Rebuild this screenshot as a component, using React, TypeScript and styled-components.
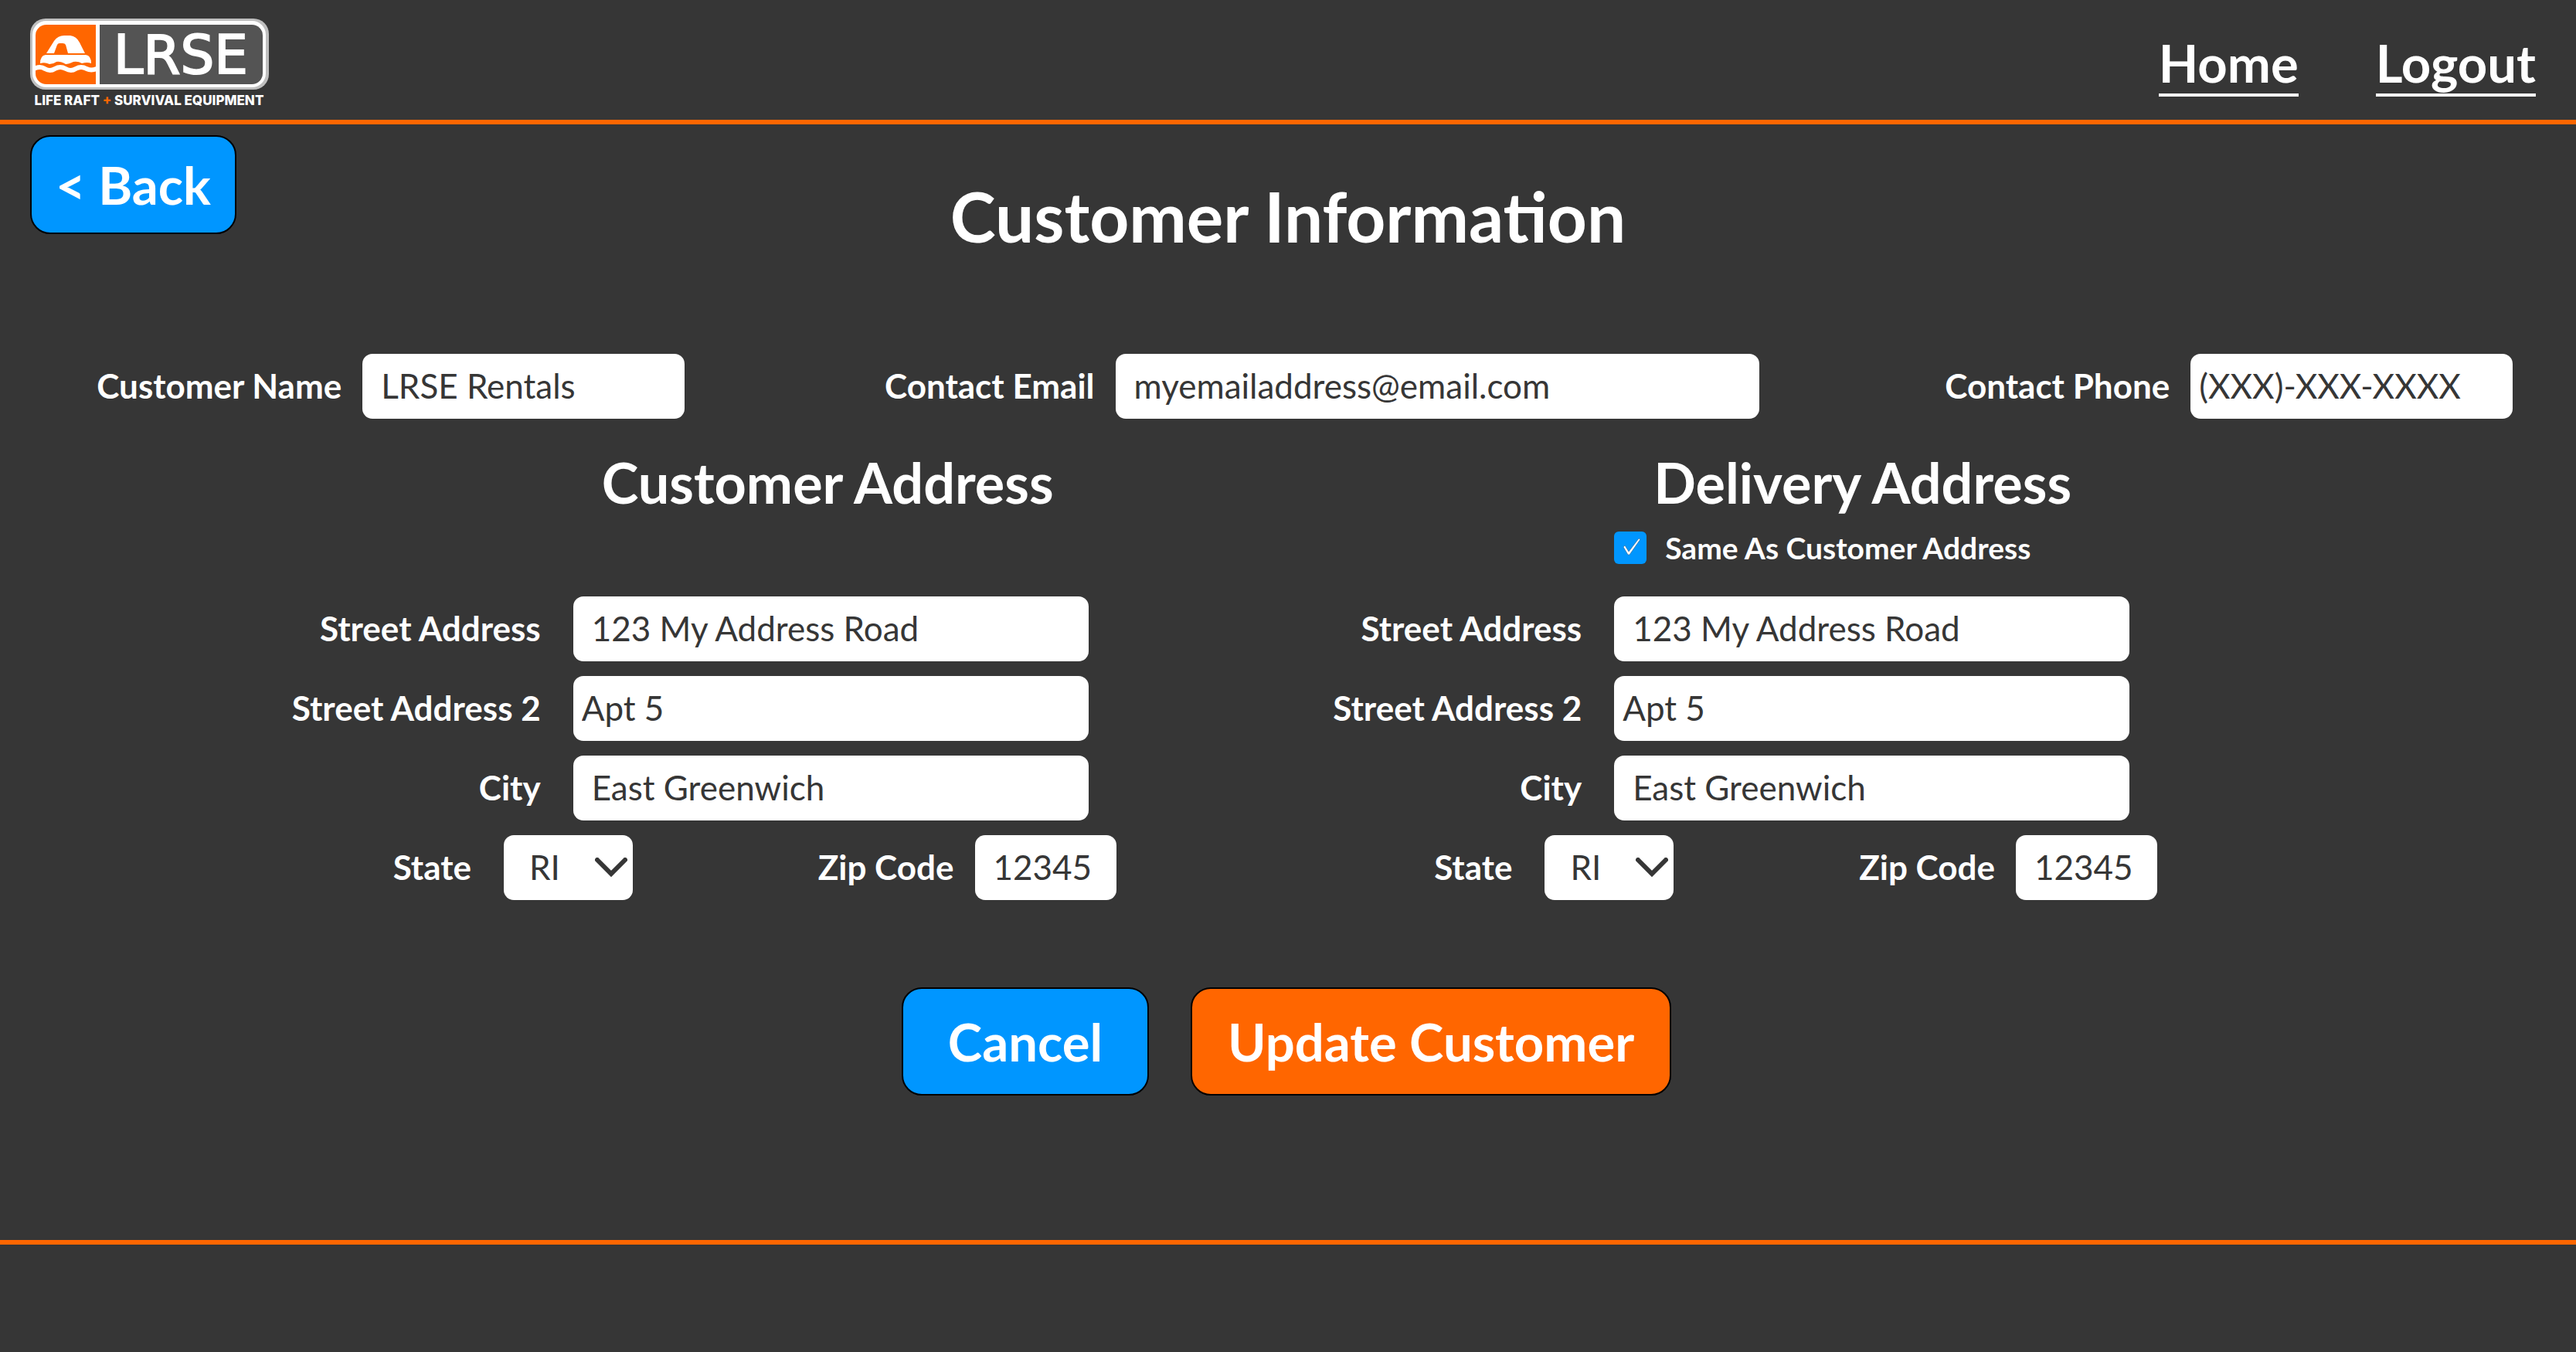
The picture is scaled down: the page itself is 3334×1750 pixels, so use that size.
import React, { useState } from "react";
import styled, { createGlobalStyle } from "styled-components";

const FONT = 'Lato, "Open Sans", sans-serif';

const GlobalStyle = createGlobalStyle`
  *, *::before, *::after { box-sizing: border-box; }
  body { margin: 0; background: #363636; }
`;

const Page = styled.div`
  display: flex;
  flex-direction: column;
  min-height: 100vh;
  background: #363636;
  color: #ffffff;
  font-family: ${FONT};
`;

const Header = styled.header`
  display: flex;
  align-items: center;
  justify-content: space-between;
  height: 161px;
  padding: 0 52px 0 39px;
  border-bottom: 6px solid #ff6600;
`;

const LogoLink = styled.a`
  display: block;
  padding-top: 12px;
  svg { display: block; }
`;

const Nav = styled.nav`
  display: flex;
  gap: 100px;
  padding-top: 10px;
`;

const NavLink = styled.a`
  color: #ffffff;
  font-size: 67px;
  font-weight: 700;
  line-height: 80px;
  text-decoration: none;
  border-bottom: 4px solid #ffffff;
`;

const Main = styled.main`
  flex: 1;
`;

const Button = styled.button<{ $tone: "blue" | "orange"; $size?: "small" | "large"; $pad: number }>`
  padding: ${(p) => `${p.$size === "small" ? 16 : 22}px ${p.$pad}px`};
  border: 2px solid #000000;
  border-radius: 26px;
  background: ${(p) => (p.$tone === "blue" ? "#0096ff" : "#ff6600")};
  color: #ffffff;
  font-family: inherit;
  font-size: 67px;
  font-weight: 700;
  line-height: 92px;
  cursor: pointer;
`;

const BackBar = styled.div`
  display: flex;
  height: 67px;
  padding: 14px 39px 0;
  align-items: flex-start;
`;

const Title = styled.h1`
  margin: 0;
  font-size: 89px;
  font-weight: 700;
  line-height: 104px;
  text-align: center;
`;

const ContactRow = styled.div`
  display: grid;
  grid-template-columns: 886fr 1391fr 975fr;
  padding: 126px 82px 0 0;
`;

const Field = styled.div<{ $gap?: number }>`
  display: flex;
  align-items: center;
  justify-content: flex-end;
  gap: ${(p) => p.$gap ?? 27}px;
`;

const Label = styled.label`
  padding-bottom: 2px;
  font-size: 44px;
  font-weight: 700;
  line-height: 60px;
  white-space: nowrap;
`;

const TextBox = styled.input<{ $width: string; $inset?: number }>`
  width: ${(p) => p.$width};
  height: 84px;
  padding: 0 0 2px ${(p) => p.$inset ?? 24}px;
  border: 0;
  border-radius: 13px;
  background: #ffffff;
  color: #363636;
  font-family: inherit;
  font-size: 44px;
`;

const Addresses = styled.div`
  display: grid;
  grid-template-columns: 1fr 1fr;
  padding: 42px 542px 0 97px;
`;

const Section = styled.section`
  display: flex;
  flex-direction: column;
  align-items: flex-end;
`;

const SectionTop = styled.div<{ $shift: number }>`
  display: flex;
  flex-direction: column;
  width: 20vw;
  height: 188px;
  margin-right: 36px;
  h2 {
    margin: 0;
    padding-right: ${(p) => p.$shift}px;
    font-size: 72px;
    font-weight: 700;
    line-height: 80px;
    text-align: center;
    white-space: nowrap;
  }
`;

const SameRow = styled.label`
  display: flex;
  align-items: center;
  gap: 24px;
  margin-top: 15px;
  font-size: 39px;
  font-weight: 700;
  line-height: 60px;
  white-space: nowrap;
`;

const Tick = styled.span`
  display: grid;
  width: 42px;
  height: 42px;
  input, svg { grid-area: 1 / 1; }
  input {
    appearance: none;
    width: 42px;
    height: 42px;
    margin: 0;
    border-radius: 6px;
    background: #ffffff;
  }
  input:checked { background: #0096ff; }
  svg { pointer-events: none; }
`;

const Rows = styled.div`
  display: grid;
  gap: 19px;
`;

const AddressRow = styled(Field)`
  margin-right: 36px;
`;

const LastRow = styled.div`
  display: flex;
  justify-content: flex-end;
  gap: 240px;
`;

const SelectWrap = styled.span`
  display: grid;
  width: 5vw;
  select, svg { grid-area: 1 / 1; }
  svg {
    justify-self: end;
    align-self: center;
    margin-right: 7px;
    pointer-events: none;
  }
`;

const Select = styled.select`
  appearance: none;
  width: 100%;
  height: 84px;
  padding: 0 0 2px 33px;
  border: 0;
  border-radius: 13px;
  background: #ffffff;
  color: #363636;
  font-family: inherit;
  font-size: 44px;
`;

const Actions = styled.div`
  display: flex;
  justify-content: center;
  gap: 54px;
  padding: 113px 4px 0 0;
`;

const Footer = styled.footer`
  height: 145px;
  border-top: 6px solid #ff6600;
`;

function Logo() {
  return (
    <svg width="310" height="120" viewBox="0 0 310 120" role="img" aria-label="LRSE Life Raft and Survival Equipment">
      <defs>
        <clipPath id="badge">
          <rect x="7" y="8" width="294" height="77" rx="14" />
        </clipPath>
      </defs>
      <rect x="0" y="0" width="309" height="92" rx="20" fill="#bfbfbf" />
      <rect x="3" y="3" width="302" height="86" rx="18" fill="#ffffff" />
      <g clipPath="url(#badge)">
        <rect x="7" y="8" width="78" height="77" fill="#ff6600" />
        <rect x="90" y="8" width="212" height="77" fill="#545454" />
        <path
          fill="#ffffff"
          fillRule="evenodd"
          d="M21 45 L31 29 Q36 22 44 22 L52 22 Q60 23 64 31 L71 45 L49 45 L46 34 Q45 32 42 32 L38 32 Q36 32 35 34 L31 45 Z"
        />
        <path
          fill="#ffffff"
          d="M20 47 L72 47 Q79 48 79 58 Q74 56 67 58 Q62 55 56 56 Q50 59 46 59 Q39 55 34 56 Q30 59 25 59 Q19 56 13 58 Q13 48 20 47 Z"
        />
        <path
          fill="none"
          stroke="#ffffff"
          strokeWidth="6"
          d="M5 65 Q13 61 19 65 Q26 69 32 65 Q39 61 46 65 Q53 69 59 65 Q66 61 73 65 Q79 68 86 65"
        />
      </g>
      <text x="195" y="71" textAnchor="middle" fill="#ffffff" stroke="#ffffff" strokeWidth="2" fontFamily="DejaVu Sans, sans-serif" fontSize="69">
        LRSE
      </text>
      <text x="154" y="112" textAnchor="middle" fill="#ffffff" fontFamily="Inter, sans-serif" fontWeight="800" fontSize="17">
        LIFE RAFT <tspan fill="#ff6600">+</tspan> SURVIVAL EQUIPMENT
      </text>
    </svg>
  );
}

function AddressSection({ id, title, shift, children }: { id: string; title: string; shift: number; children?: React.ReactNode }) {
  return (
    <Section>
      <SectionTop $shift={shift}>
        <h2>{title}</h2>
        {children}
      </SectionTop>
      <Rows>
        <AddressRow $gap={42}>
          <Label htmlFor={`${id}-street`}>Street Address</Label>
          <TextBox id={`${id}-street`} $width="20vw" defaultValue="123 My Address Road" />
        </AddressRow>
        <AddressRow $gap={42}>
          <Label htmlFor={`${id}-street2`}>Street Address 2</Label>
          <TextBox id={`${id}-street2`} $width="20vw" $inset={11} defaultValue="Apt 5" />
        </AddressRow>
        <AddressRow $gap={42}>
          <Label htmlFor={`${id}-city`}>City</Label>
          <TextBox id={`${id}-city`} $width="20vw" defaultValue="East Greenwich" />
        </AddressRow>
        <LastRow>
          <Field $gap={42}>
            <Label htmlFor={`${id}-state`}>State</Label>
            <SelectWrap>
              <Select id={`${id}-state`} defaultValue="RI">
                <option>RI</option>
                <option>CT</option>
                <option>MA</option>
              </Select>
              <svg width="42" height="26" viewBox="0 0 42 26" fill="none" stroke="#363636" strokeWidth="6" strokeLinecap="round">
                <path d="M3 3 L21 21 L39 3" />
              </svg>
            </SelectWrap>
          </Field>
          <Field $gap={27}>
            <Label htmlFor={`${id}-zip`}>Zip Code</Label>
            <TextBox id={`${id}-zip`} $width="183px" defaultValue="12345" />
          </Field>
        </LastRow>
      </Rows>
    </Section>
  );
}

export default function App() {
  const [same, setSame] = useState(true);
  return (
    <Page>
      <GlobalStyle />
      <Header>
        <LogoLink href="#home">
          <Logo />
        </LogoLink>
        <Nav>
          <NavLink href="#home">Home</NavLink>
          <NavLink href="#logout">Logout</NavLink>
        </Nav>
      </Header>
      <Main>
        <BackBar>
          <Button $tone="blue" $size="small" $pad={31}>{"< Back"}</Button>
        </BackBar>
        <Title>Customer Information</Title>
        <ContactRow>
          <Field>
            <Label htmlFor="name">Customer Name</Label>
            <TextBox id="name" $width="12.5vw" defaultValue="LRSE Rentals" />
          </Field>
          <Field>
            <Label htmlFor="email">Contact Email</Label>
            <TextBox id="email" type="email" $width="25vw" defaultValue="myemailaddress@email.com" />
          </Field>
          <Field>
            <Label htmlFor="phone">Contact Phone</Label>
            <TextBox id="phone" type="tel" $width="12.5vw" $inset={11} defaultValue="(XXX)-XXX-XXXX" />
          </Field>
        </ContactRow>
        <Addresses>
          <AddressSection id="customer" title="Customer Address" shift={8} />
          <AddressSection id="delivery" title="Delivery Address" shift={24}>
            <SameRow>
              <Tick>
                <input type="checkbox" checked={same} onChange={(e) => setSame(e.target.checked)} />
                <svg width="42" height="42" viewBox="0 0 42 42">
                  <path d="M12 20 L14 18 L19 26 L32 9 L34 10 L20 30 L18 30 Z" fill="#ffffff" stroke="#1c4f78" strokeWidth="0.5" />
                </svg>
              </Tick>
              Same As Customer Address
            </SameRow>
          </AddressSection>
        </Addresses>
        <Actions>
          <Button $tone="blue" $pad={58}>Cancel</Button>
          <Button $tone="orange" $pad={46}>Update Customer</Button>
        </Actions>
      </Main>
      <Footer />
    </Page>
  );
}
